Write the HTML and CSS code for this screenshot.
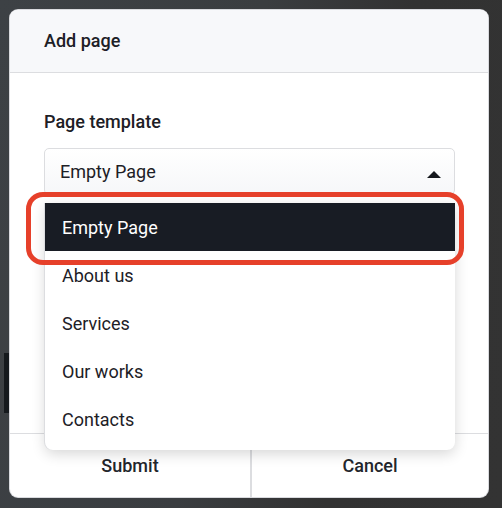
FILE: index.html
```html
<!DOCTYPE html>
<html>
<head>
<meta charset="utf-8">
<link rel="stylesheet" href="styles.css">
</head>
<body>
<div class="backdrop-bar"></div>
<div class="modal">
  <header class="modal-header">Add page</header>
  <div class="modal-body">
    <div class="field-label">Page template</div>
    <div class="select-wrap">
      <div class="select">
        <span>Empty Page</span>
        <svg class="caret" width="14" height="7" viewBox="0 0 14 7"><path d="M0 7 L7 0 L14 7 Z" fill="#15181d"/></svg>
      </div>
      <ul class="dropdown">
        <li class="option active">Empty Page</li>
        <li class="option">About us</li>
        <li class="option">Services</li>
        <li class="option">Our works</li>
        <li class="option">Contacts</li>
      </ul>
      <div class="ring"></div>
    </div>
  </div>
  <footer class="modal-footer">
    <button class="btn btn-left">Submit</button>
    <button class="btn btn-right">Cancel</button>
  </footer>
</div>
</body>
</html>
```

FILE: styles.css
```css
* { box-sizing: border-box; }
html, body { margin: 0; height: 100%; }
body {
  width: 502px;
  height: 508px;
  padding: 10px 14px 11px 10px;
  background: linear-gradient(100deg, #3d4145 0%, #3a3d40 45%, #323232 70%, #333333 100%);
  font-family: Roboto, "Liberation Sans", sans-serif;
  color: #1d2026;
  position: relative;
  overflow: hidden;
}
.backdrop-bar {
  position: absolute;
  left: 4px;
  top: 353px;
  width: 6px;
  height: 60px;
  background: #15191d;
}
.modal {
  position: relative;
  width: 478px;
  height: 487px;
  background: #fff;
  border-radius: 8px;
  display: flex;
  flex-direction: column;
  box-shadow: 0 0 0 1px #d9dade;
}
.modal-header {
  height: 63px;
  flex: none;
  background: #f7f8fa;
  border-bottom: 1px solid #dcdde0;
  border-radius: 8px 8px 0 0;
  padding-left: 34px;
  display: flex;
  align-items: center;
  font-size: 18px;
  font-weight: 500;
  padding-bottom: 1px;
}
.modal-body {
  flex: 1;
  padding: 37px 33px 0 34px;
}
.field-label {
  font-size: 18px;
  font-weight: 500;
  line-height: 24px;
  margin-bottom: 14px;
}
.select-wrap { position: relative; }
.select {
  height: 47px;
  border: 1px solid #dcdde0;
  border-radius: 5px;
  background: linear-gradient(#ffffff, #f6f7f9);
  display: flex;
  align-items: center;
  justify-content: space-between;
  padding: 0 13px 0 15px;
  font-size: 18px;
}
.caret { margin-top: 5px; }
.dropdown {
  position: absolute;
  top: 55px;
  left: 1px;
  right: 0;
  margin: 0;
  padding: 0 0 7px;
  list-style: none;
  background: #fff;
  border-radius: 0 0 8px 8px;
  box-shadow: -1px 0 0 #dcdde0, 0 4px 14px rgba(0,0,0,0.16);
  z-index: 2;
}
.option {
  height: 48px;
  display: flex;
  align-items: center;
  padding-left: 17px;
  font-size: 18px;
}
.option.active {
  background: #181c24;
  color: #fff;
}
.ring {
  position: absolute;
  top: 44px;
  left: -18px;
  width: 438px;
  height: 73px;
  border: 5px solid #e6402a;
  border-radius: 17px;
  z-index: 3;
}
.modal-footer {
  height: 64px;
  flex: none;
  border-top: 1px solid #dcdde0;
  display: flex;
}
.btn {
  border: none;
  background: transparent;
  font-family: inherit;
  font-size: 18px;
  font-weight: 500;
  color: #23262c;
  padding: 0 0 1px;
}
.btn-left { flex: 0 0 240px; }
.btn-right { flex: 1; border-left: 2px solid #dcdde0; }
```
